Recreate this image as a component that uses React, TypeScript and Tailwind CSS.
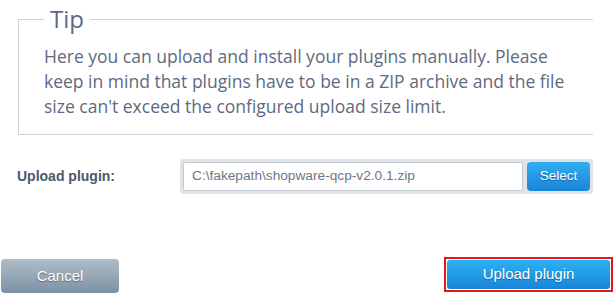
import React from "react";

export default function App() {
  return (
    <div className="w-[613px] h-[294px] bg-white overflow-hidden relative" style={{ fontFamily: "'Liberation Sans', Arial, sans-serif" }}>
      <fieldset className="mt-[3px] ml-[18px] mr-[20px] border border-r-0 border-[#d3d3d3] pl-[25px] pr-[18px] pb-[15px] pt-[9px] m-0">
        <legend
          className="px-[6px] text-[24px] leading-[32px] text-[#5e6a86]"
          style={{ fontFamily: "'Open Sans', sans-serif" }}
        >
          Tip
        </legend>
        <p
          className="text-[17.5px] leading-[25px] text-[#5d6a80]"
          style={{ fontFamily: "'Open Sans', sans-serif" }}
        >
          Here you can upload and install your plugins manually. Please keep in mind that plugins have to be in a ZIP archive and the file size can't exceed the configured upload size limit.
        </p>
      </fieldset>

      <div className="flex items-center mt-[24px] pl-[17px] pr-[20px]">
        <label className="w-[163px] text-[14px] font-bold text-[#4a5a6b]">Upload plugin:</label>
        <div className="flex-1 flex items-stretch bg-[#dee3e8] rounded-[4px] p-[3px] h-[35px]">
          <div className="flex-1 flex items-center bg-white border border-[#c4cbd2] rounded-[2px] pl-[8px] text-[13.7px] text-[#6b7987]">
            C:\fakepath\shopware-qcp-v2.0.1.zip
          </div>
          <button className="ml-[4px] w-[63px] rounded-[4px] bg-gradient-to-b from-[#30aef2] to-[#1a84d6] text-white text-[13.5px] [text-shadow:0_1px_1px_rgba(0,0,0,0.3)]">
            Select
          </button>
        </div>
      </div>

      <div className="flex justify-between items-start mt-[63px] pl-[1px]">
        <button className="mt-[2px] w-[118px] h-[34px] rounded-[4px] bg-gradient-to-b from-[#aebdc9] to-[#7d91a3] text-white text-[15px] [text-shadow:0_1px_1px_rgba(0,0,0,0.35)]">
          Cancel
        </button>
        <div className="border-2 border-[#e8141e] w-[169px] h-[35px] p-px">
          <button className="w-full h-full rounded-[3px] bg-gradient-to-b from-[#2db0f4] to-[#1985d7] text-white text-[15px] [text-shadow:0_1px_1px_rgba(0,0,0,0.3)]">
            Upload plugin
          </button>
        </div>
      </div>
    </div>
  );
}
